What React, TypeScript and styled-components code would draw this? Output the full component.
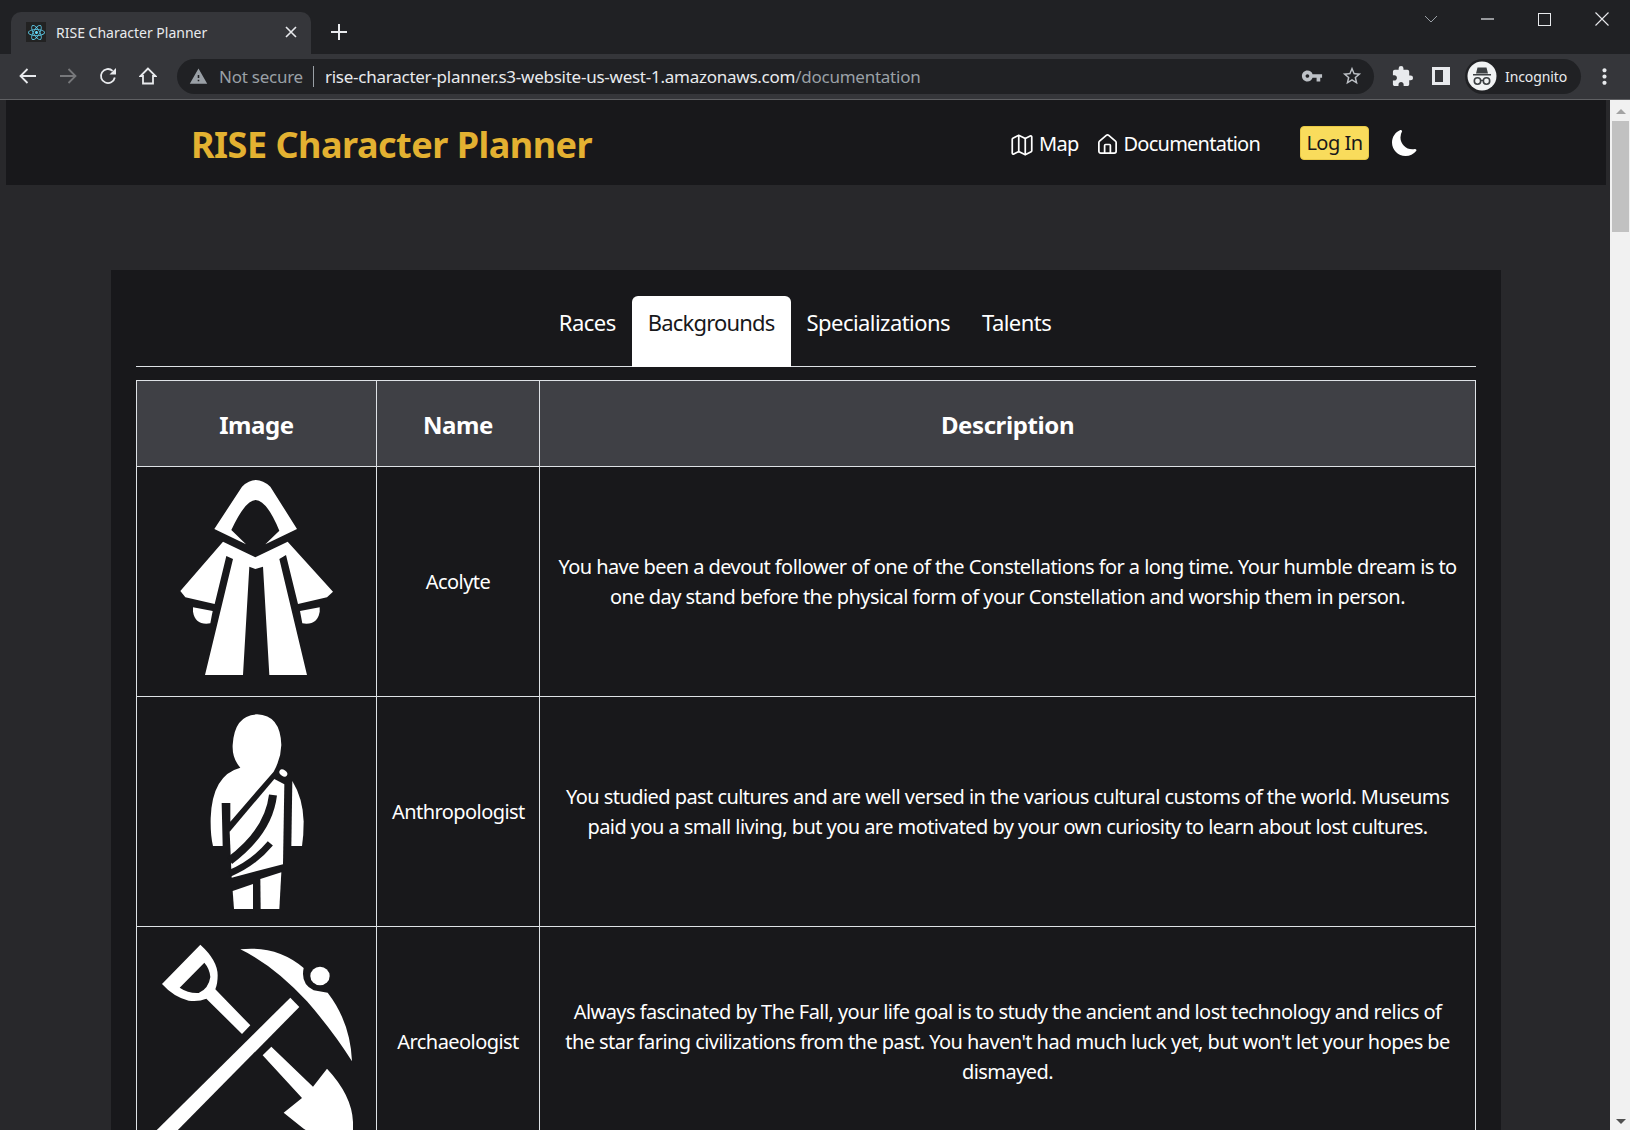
import * as React from "react";
import styled, { createGlobalStyle } from "styled-components";
import { BsMoonFill } from "react-icons/bs";
import { FaReact } from "react-icons/fa";
import { House, Map as MapIcon } from "lucide-react";
import { MdExtension, MdMoreVert, MdStarBorder, MdVpnKey, MdWarning } from "react-icons/md";

const FONT = `"Noto Sans", "Open Sans", sans-serif`;

const Global = createGlobalStyle`
html, body, #root {
  margin: 0;
  padding: 0;
  height: 100%;
  overflow: hidden;
  background: #202124;
  font-family: ${FONT};
}
* { box-sizing: border-box; }
`;

const Root = styled.div`
  width: 1630px;
  height: 1130px;
  display: flex;
  flex-direction: column;
  overflow: hidden;
`;

/* browser chrome */
const TabStrip = styled.div`
  height: 54px;
  flex: none;
  display: flex;
  align-items: flex-end;
  padding-left: 11px;
  background: #202124;
`;

const BrowserTab = styled.div`
  width: 300px;
  height: 42px;
  display: flex;
  align-items: center;
  padding: 0 14px 2px 15px;
  background: #35363a;
  border-radius: 10px 10px 0 0;
  color: #e8eaed;
  font-size: 14px;
`;

const Favicon = styled.span`
  width: 20px;
  height: 20px;
  margin-right: 10px;
  display: flex;
  align-items: center;
  justify-content: center;
  background: #222;
  color: #61dafb;
  font-size: 17px;
`;

const TabTitle = styled.span`
  flex: 1;
`;

const NewTab = styled.span`
  width: 40px;
  height: 42px;
  margin-left: 8px;
  padding-bottom: 2px;
  display: flex;
  align-items: center;
  justify-content: center;
`;

const WindowButtons = styled.div`
  margin-left: auto;
  align-self: flex-start;
  display: flex;
  align-items: center;
  height: 38px;
`;

const WindowButton = styled.span`
  width: 57px;
  display: flex;
  justify-content: center;
`;

const Toolbar = styled.div`
  height: 46px;
  flex: none;
  display: flex;
  align-items: center;
  padding: 0 5px 1px 8px;
  background: #35363a;
  border-bottom: 1px solid #5f6063;
`;

const NavIcon = styled.span`
  width: 40px;
  display: flex;
  justify-content: center;
`;

const Omnibox = styled.div`
  width: 1197px;
  height: 35px;
  margin-left: 9px;
  padding: 0 11px 0 12px;
  display: flex;
  align-items: center;
  background: #202124;
  border-radius: 18px;
  font-size: 17px;
  letter-spacing: -0.25px;
  white-space: nowrap;
`;

const Warn = styled.span`
  display: flex;
  color: #9aa0a6;
  font-size: 19px;
  margin-right: 11px;
`;

const Insecure = styled.span`
  color: #9aa0a6;
`;

const OmniDivider = styled.span`
  width: 1px;
  height: 21px;
  margin: 0 11px 0 10px;
  background: #9aa0a6;
`;

const UrlHost = styled.span`
  color: #e8eaed;
`;

const UrlPath = styled.span`
  color: #9aa0a6;
`;

const OmniActions = styled.div`
  margin-left: auto;
  display: flex;
  align-items: center;
  gap: 18px;
  color: #bdc1c6;
  font-size: 22px;
`;

const OmniIcon = styled.span`
  display: flex;
`;

const ToolIcons = styled.div`
  display: flex;
  align-items: center;
  margin-left: 17px;
  gap: 18px;
  color: #e8eaed;
  font-size: 23px;
`;

const Profile = styled.div`
  width: 116px;
  height: 35px;
  margin-left: 15px;
  display: flex;
  align-items: center;
  padding-left: 2px;
  gap: 8px;
  background: #202124;
  border-radius: 18px;
  color: #e8eaed;
  font-size: 14px;
  letter-spacing: -0.1px;
`;

const Kebab = styled.span`
  display: flex;
  margin-left: 11px;
  color: #e8eaed;
  font-size: 25px;
`;

/* page */
const Viewport = styled.div`
  flex: 1;
  min-height: 0;
  display: flex;
  overflow: hidden;
  background: #28282b;
`;

const Page = styled.div`
  flex: 1;
  min-width: 0;
  padding: 0 4px 0 6px;
  overflow: hidden;
  color: #fff;
  font-size: 20px;
  line-height: 30px;
`;

const Scrollbar = styled.div`
  width: 20px;
  flex: none;
  display: flex;
  flex-direction: column;
  align-items: center;
  padding-left: 2px;
  padding-right: 1px;
  background: #f1f1f1;
`;

const ScrollArrow = styled.span<{ $down?: boolean }>`
  width: 0;
  height: 0;
  margin: ${(p) => (p.$down ? "auto 0 6px" : "9px 0 7px")};
  border-left: 5px solid transparent;
  border-right: 5px solid transparent;
  ${(p) => (p.$down ? "border-top: 5px solid #505050;" : "border-bottom: 5px solid #a3a3a3;")}
`;

const ScrollThumb = styled.span`
  width: 100%;
  height: 111px;
  background: #c1c1c1;
`;

const Navbar = styled.nav`
  height: 85px;
  display: flex;
  align-items: center;
  padding: 0 188px 0 185px;
  background: #18181b;
`;

const Brand = styled.div`
  margin-top: 4px;
  color: #e3b131;
  font-size: 36px;
  font-weight: 700;
  letter-spacing: -0.5px;
`;

const NavLinks = styled.div`
  margin-left: auto;
  display: flex;
  align-items: center;
`;

const NavLink = styled.a<{ $gap: number }>`
  display: flex;
  align-items: center;
  gap: 4px;
  margin-top: 2px;
  margin-right: ${(p) => p.$gap}px;
  color: #fff;
  letter-spacing: -0.75px;
  svg {
    margin-top: 2px;
  }
`;

const LoginButton = styled.button`
  width: 69px;
  height: 34px;
  margin-right: 23px;
  padding: 0;
  border: 1px solid #e9c946;
  border-radius: 4px;
  background: #f9dc5c;
  color: #18181b;
  font-family: ${FONT};
  font-size: 20px;
  letter-spacing: -0.5px;
`;

const MoonIcon = styled.span`
  display: flex;
  color: #fff;
  font-size: 26px;
`;

const Card = styled.section`
  margin: 85px 105px 0;
  padding: 26px 25px 0;
  background: #18181b;
`;

const Tabs = styled.div`
  height: 71px;
  display: flex;
  justify-content: center;
  border-bottom: 1px solid #dee2e6;
  padding-right: 2px;
`;

const TabItem = styled.a<{ $active?: boolean }>`
  height: 71px;
  padding: 11px 16px 0;
  border-radius: 6px 6px 0 0;
  color: ${(p) => (p.$active ? "#18181b" : "#fff")};
  background: ${(p) => (p.$active ? "#fff" : "transparent")};
  font-size: 22px;
  letter-spacing: ${(p) => (p.$active ? "-0.8px" : "-0.55px")};
`;

const Table = styled.table`
  width: 1340px;
  margin-top: 13px;
  table-layout: fixed;
  border-collapse: collapse;
  text-align: center;
  th, td {
    border: 1px solid #dee2e6;
    vertical-align: middle;
    padding: 15px;
  }
  th {
    height: 86px;
    padding-top: 17px;
    background: #3f4045;
    font-size: 24px;
    font-weight: 700;
    letter-spacing: -0.4px;
  }
  td {
    height: 230px;
    letter-spacing: -0.56px;
  }
`;

const ImageCell = styled.td`
  && {
    padding: 0 15px;
  }
`;

const DescriptionCell = styled.td`
  && {
    padding: 15px 18px;
  }
`;

const Glyph = styled.svg`
  display: block;
  width: 200px;
  height: 200px;
  margin: 0 auto;
  fill: #fff;
  overflow: visible;
`;

const AcolyteIcon = () => (
  <Glyph viewBox="80 66 600 600">
    <path d="M252 207 L335 80 Q376 40 420 80 L500 207 L405 253 L447 212 Q410 122 376 120 Q345 120 303 210 L347 253 Z" />
    <path d="M278 245 L375 292 L472 245 L608 395 L590 412 L503 432 L467 285 L447 297 L530 645 L417 645 L398 320 L375 327 L357 320 L338 645 L224 645 L308 297 L288 288 L253 432 L165 412 L150 393 Z" />
    <path d="M188 442 L247 453 L240 490 Q195 497 188 455 Z" />
    <path d="M568 442 L509 453 L516 490 Q561 497 568 455 Z" />
  </Glyph>
);

const AnthropologistIcon = () => (
  <Glyph viewBox="80 51 600 600">
    <path d="M330 218 Q305 190 307 150 Q312 60 380 58 Q450 60 453 150 Q452 190 430 230 L300 380 L300 324 L274 324 L277 453 L248 453 Q240 420 241 370 Q245 240 330 218 Z" />
    <ellipse cx="459" cy="234" rx="13" ry="9" transform="rotate(35 459 234)" />
    <path d="M486 258 Q518 310 520 380 Q520 420 515 453 L483 453 Z" />
    <path d="M432 252 L462 268 L458 508 L304 548 L298 410 Z" />
    <path d="M428 300 Q415 410 298 497" fill="none" stroke="#18181b" strokeWidth="24" />
    <path d="M420 445 Q370 505 298 535" fill="none" stroke="#18181b" strokeWidth="20" />
    <path d="M307 588 L368 567 L368 642 L311 642 Z" />
    <path d="M390 552 L453 532 L447 642 L391 642 Z" />
  </Glyph>
);

const ArchaeologistIcon = () => (
  <Glyph viewBox="80 50 600 600">
    <path d="M330 72 Q440 60 520 128 Q510 175 550 195 L592 202 Q660 290 665 408 Q610 320 530 228 Q430 120 330 72 Z" />
    <ellipse cx="569" cy="152" rx="29" ry="28" />
    <path d="M480 217 L507 245 L105 652 L43 650 Z" />
    <path
      fillRule="evenodd"
      d="M210 58 Q262 105 262 150 Q262 175 255 192 L360 300 L335 326 L228 220 Q205 230 175 226 Q130 215 95 176 Z M222 112 L148 187 Q175 205 205 203 Q235 190 240 155 Q238 130 222 112 Z"
    />
    <path d="M423 364 L548 484 L590 430 Q665 510 668 590 L668 650 L580 650 L520 610 L460 562 L515 518 L397 390 Z" />
  </Glyph>
);

const BackIcon = () => (
  <svg width="18" height="16" viewBox="0 0 18 16">
    <path d="M17 8H2M8.5 1L1.5 8l7 7" fill="none" stroke="#e8eaed" strokeWidth="1.8" />
  </svg>
);

const ForwardIcon = () => (
  <svg width="18" height="16" viewBox="0 0 18 16">
    <path d="M1 8h15M9.5 1l7 7-7 7" fill="none" stroke="#77787b" strokeWidth="1.8" />
  </svg>
);

const ReloadIcon = () => (
  <svg width="18" height="18" viewBox="0 0 18 18">
    <path d="M15.8 10.5A7 7 0 1 1 13.6 3.8" fill="none" stroke="#e8eaed" strokeWidth="1.8" />
    <path d="M17 1v6.5h-6.5z" fill="#e8eaed" />
  </svg>
);

const HomeIcon = () => (
  <svg width="18" height="18" viewBox="0 0 18 18">
    <path d="M9 1.5L1.5 9h2.5v7.5h10V9h2.5z" fill="none" stroke="#e8eaed" strokeWidth="1.8" />
  </svg>
);

const IncognitoBadge = () => (
  <svg width="30" height="30" viewBox="0 0 30 30">
    <circle cx="15" cy="15" r="14.5" fill="#f1f3f4" />
    <path d="M10.5 6.5h9l1.5 6H9z M6 13h18v1.6H6z" fill="#3c4043" />
    <circle cx="10.5" cy="20" r="3.2" fill="none" stroke="#3c4043" strokeWidth="1.6" />
    <circle cx="19.5" cy="20" r="3.2" fill="none" stroke="#3c4043" strokeWidth="1.6" />
    <path d="M13.5 19.5h3" stroke="#3c4043" strokeWidth="1.4" />
  </svg>
);

const SidePanelIcon = () => (
  <svg width="18" height="18" viewBox="0 0 18 18">
    <path d="M0 0h18v18H0z M3 3v12h8V3z" fill="#e8eaed" fillRule="evenodd" />
  </svg>
);

const rows = [
  {
    name: "Acolyte",
    icon: <AcolyteIcon />,
    text: "You have been a devout follower of one of the Constellations for a long time. Your humble dream is to one day stand before the physical form of your Constellation and worship them in person.",
  },
  {
    name: "Anthropologist",
    icon: <AnthropologistIcon />,
    text: "You studied past cultures and are well versed in the various cultural customs of the world. Museums paid you a small living, but you are motivated by your own curiosity to learn about lost cultures.",
  },
  {
    name: "Archaeologist",
    icon: <ArchaeologistIcon />,
    text: "Always fascinated by The Fall, your life goal is to study the ancient and lost technology and relics of the star faring civilizations from the past. You haven't had much luck yet, but won't let your hopes be dismayed.",
  },
];

const tabs = ["Races", "Backgrounds", "Specializations", "Talents"];

const App = () => (
  <Root>
    <Global />
    <TabStrip>
      <BrowserTab>
        <Favicon>
          <FaReact />
        </Favicon>
        <TabTitle>RISE Character Planner</TabTitle>
        <svg width="12" height="12" viewBox="0 0 12 12">
          <path d="M1 1l10 10M11 1L1 11" stroke="#e8eaed" strokeWidth="1.6" />
        </svg>
      </BrowserTab>
      <NewTab>
        <svg width="16" height="16" viewBox="0 0 16 16">
          <path d="M8 0v16M0 8h16" stroke="#e8eaed" strokeWidth="2" />
        </svg>
      </NewTab>
      <WindowButtons>
        <WindowButton>
          <svg width="14" height="8" viewBox="0 0 14 8">
            <path d="M1 1l6 6 6-6" fill="none" stroke="#9aa0a6" strokeWidth="1" />
          </svg>
        </WindowButton>
        <WindowButton>
          <svg width="13" height="2" viewBox="0 0 13 2">
            <path d="M0 1h13" stroke="#e8eaed" strokeWidth="1.2" />
          </svg>
        </WindowButton>
        <WindowButton>
          <svg width="13" height="13" viewBox="0 0 13 13">
            <rect x="0.5" y="0.5" width="12" height="12" fill="none" stroke="#e8eaed" />
          </svg>
        </WindowButton>
        <WindowButton>
          <svg width="14" height="14" viewBox="0 0 14 14">
            <path d="M0.5 0.5l13 13M13.5 0.5l-13 13" stroke="#e8eaed" strokeWidth="1.1" />
          </svg>
        </WindowButton>
      </WindowButtons>
    </TabStrip>
    <Toolbar>
      <NavIcon>
        <BackIcon />
      </NavIcon>
      <NavIcon>
        <ForwardIcon />
      </NavIcon>
      <NavIcon>
        <ReloadIcon />
      </NavIcon>
      <NavIcon>
        <HomeIcon />
      </NavIcon>
      <Omnibox>
        <Warn>
          <MdWarning />
        </Warn>
        <Insecure>Not secure</Insecure>
        <OmniDivider />
        <UrlHost>rise-character-planner.s3-website-us-west-1.amazonaws.com</UrlHost>
        <UrlPath>/documentation</UrlPath>
        <OmniActions>
          <OmniIcon>
            <MdVpnKey />
          </OmniIcon>
          <OmniIcon>
            <MdStarBorder />
          </OmniIcon>
        </OmniActions>
      </Omnibox>
      <ToolIcons>
        <OmniIcon>
          <MdExtension />
        </OmniIcon>
        <OmniIcon>
          <SidePanelIcon />
        </OmniIcon>
      </ToolIcons>
      <Profile>
        <IncognitoBadge />
        Incognito
      </Profile>
      <Kebab>
        <MdMoreVert />
      </Kebab>
    </Toolbar>
    <Viewport>
      <Page>
        <Navbar>
          <Brand>RISE Character Planner</Brand>
          <NavLinks>
            <NavLink $gap={18}>
              <MapIcon size={26} strokeWidth={1.6} />
              Map
            </NavLink>
            <NavLink $gap={40}>
              <House size={23} strokeWidth={1.8} />
              Documentation
            </NavLink>
            <LoginButton>Log In</LoginButton>
            <MoonIcon>
              <BsMoonFill />
            </MoonIcon>
          </NavLinks>
        </Navbar>
        <Card>
          <Tabs>
            {tabs.map((t) => (
              <TabItem key={t} $active={t === "Backgrounds"}>
                {t}
              </TabItem>
            ))}
          </Tabs>
          <Table>
            <colgroup>
              <col style={{ width: 240 }} />
              <col style={{ width: 163 }} />
              <col />
            </colgroup>
            <thead>
              <tr>
                <th>Image</th>
                <th>Name</th>
                <th>Description</th>
              </tr>
            </thead>
            <tbody>
              {rows.map((r) => (
                <tr key={r.name}>
                  <ImageCell>{r.icon}</ImageCell>
                  <td>{r.name}</td>
                  <DescriptionCell>{r.text}</DescriptionCell>
                </tr>
              ))}
            </tbody>
          </Table>
        </Card>
      </Page>
      <Scrollbar>
        <ScrollArrow />
        <ScrollThumb />
        <ScrollArrow $down />
      </Scrollbar>
    </Viewport>
  </Root>
);

export default App;
